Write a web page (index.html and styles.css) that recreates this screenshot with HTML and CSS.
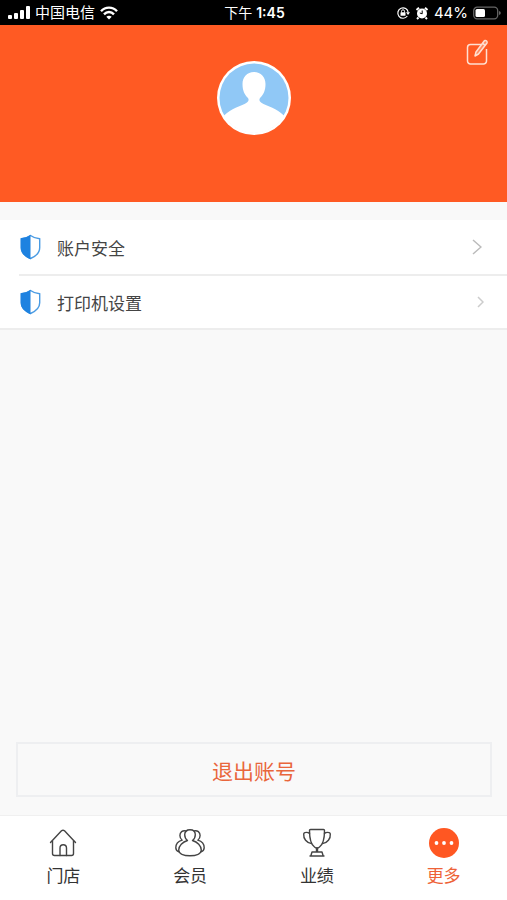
FILE: index.html
```html
<!DOCTYPE html>
<html lang="zh-CN">
<head>
    <meta charset="UTF-8">
    <meta name="viewport" content="width=device-width, initial-scale=1.0">
    <title>更多</title>
    <link rel="stylesheet" href="styles.css">
</head>
<body>
    <div class="status-bar">
        <div class="status-left">
            <svg width="22" height="14" viewBox="0 0 22 14" fill="#fff" aria-hidden="true">
                <rect x="0" y="9" width="4" height="4" rx="1"/>
                <rect x="6" y="7" width="4" height="6" rx="1"/>
                <rect x="12" y="4" width="4" height="9" rx="1"/>
                <rect x="18" y="0" width="4" height="13" rx="1"/>
            </svg>
            <span>中国电信</span>
            <svg width="18" height="14" viewBox="0 0 18 14" fill="none" stroke="#fff" stroke-width="2.4" aria-hidden="true">
                <path d="M1 5.2C5.4 .4 12.6 .4 17 5.2"/>
                <path d="M4 8.3c2.9-3 7.100-3 10 0"/>
                <path d="M9 13.500L6.300 10.700c1.600-1.400 3.800-1.400 5.400 0z" fill="#fff" stroke="none"/>
            </svg>
        </div>
        <div class="status-time">下午 <b>1:45</b></div>
        <div class="status-right">
            <svg width="14" height="14" viewBox="0 0 14 14" fill="none" stroke="#fff" aria-hidden="true">
                <path d="M11.300 10A5.200 5.200 0 1 1 12.200 6.500" stroke-width="1.200"/>
                <path d="M10 6.300h4L12 9z" fill="#fff" stroke="none"/>
                <rect x="4.500" y="6.200" width="5" height="3.600" rx=".5" fill="#fff" stroke="none"/>
                <path d="M5.500 6.500V5.300a1.500 1.500 0 0 1 3 0v1.200"/>
            </svg>
            <svg width="14" height="14" viewBox="0 0 14 14" fill="none" stroke="#fff" aria-hidden="true">
                <circle cx="7" cy="7.500" r="5" fill="#fff" stroke="none"/>
                <path d="M1.500 4L4 1.700M12.500 4L10 1.700M3.500 11.500L2 13M10.500 11.500L12 13" stroke-width="2"/>
                <path d="M7.200 4.500v3.300L4.800 7" stroke="#000"/>
            </svg>
            <span class="battery-text">44%</span>
            <svg width="28" height="14" viewBox="0 0 28 14" aria-hidden="true">
                <rect x=".7" y="1.200" width="24" height="11.600" rx="3.500" fill="none" stroke="#666" stroke-width="1.300"/>
                <rect x="2.500" y="3" width="9.500" height="8" rx="1.500" fill="#fff"/>
                <path d="M26 5v4q1.800-.6 1.800-2T26 5z" fill="#666"/>
            </svg>
        </div>
    </div>

    <header class="profile">
        <svg class="avatar" viewBox="0 0 74 74" role="img" aria-label="头像">
            <defs>
                <clipPath id="avatar-clip"><circle cx="37" cy="37" r="35"/></clipPath>
            </defs>
            <circle cx="37" cy="37" r="37" fill="#fff"/>
            <circle cx="37" cy="37" r="34.500" fill="#90c8f6"/>
            <path clip-path="url(#avatar-clip)" fill="#fff" d="M37 11c-7 0-11.500 5-11.500 12 0 6.500 2 10.500 5.500 14 1.500 2.500 0 4.500-3.500 6C20 46 11 49.500 5 57v17h64V57c-6-7.500-15-11-22.500-14-3.500-1.500-5-3.500-3.500-6 3.500-3.500 5.500-7.500 5.500-14 0-7-4.500-12-11.500-12z"/>
        </svg>
        <button class="edit-button" type="button" aria-label="编辑">
            <svg width="24" height="28" viewBox="0 0 24 28" fill="none" stroke="#ffe0d2" stroke-width="1.500" stroke-linejoin="round" aria-hidden="true">
                <path d="M15 5.500H4.500a3 3 0 0 0-3 3V22a3 3 0 0 0 3 3h13a3 3 0 0 0 3-3V10"/>
                <path d="M9 17l1-4L18 2.300a1.700 1.700 0 0 1 2.800 2L12.500 15z" fill="#ff8c64"/>
                <path d="M16.500 4.300l2.800 2"/>
            </svg>
        </button>
    </header>

    <main class="content">
        <nav class="menu">
            <a class="menu-item" href="#">
                <svg class="shield" viewBox="0 0 22 26" aria-hidden="true">
                    <path d="M11 1.500c3 2.200 6 3.100 9.200 3.300v9c0 4.900-3.700 8.400-9.200 10.700C5.500 22.200 1.800 18.700 1.800 13.800v-9C5 4.600 8 3.700 11 1.500z" fill="#fff" stroke="#4a9be3" stroke-width="1.400"/>
                    <path d="M11 .8C8 3 5 4 1.200 4.200v9.600C1.200 19 5.200 22.800 11 25.200z" fill="#1e82e0"/>
                </svg>
                <span class="menu-text">账户安全</span>
                <svg class="arrow" width="10" height="16" viewBox="0 0 10 16" aria-hidden="true"><path d="M1 1l8 7-8 7"/></svg>
            </a>
            <a class="menu-item" href="#">
                <svg class="shield" viewBox="0 0 22 26" aria-hidden="true">
                    <path d="M11 1.500c3 2.200 6 3.100 9.200 3.300v9c0 4.900-3.700 8.400-9.200 10.700C5.500 22.200 1.800 18.700 1.800 13.800v-9C5 4.600 8 3.700 11 1.500z" fill="#fff" stroke="#4a9be3" stroke-width="1.400"/>
                    <path d="M11 .8C8 3 5 4 1.200 4.200v9.600C1.200 19 5.200 22.800 11 25.200z" fill="#1e82e0"/>
                </svg>
                <span class="menu-text">打印机设置</span>
                <svg class="arrow arrow-small" width="7" height="12" viewBox="0 0 7 12" aria-hidden="true"><path d="M1 1l5 5-5 5"/></svg>
            </a>
        </nav>
        <button class="logout" type="button">退出账号</button>
    </main>

    <nav class="tab-bar">
        <a class="tab" href="#">
            <svg class="tab-icon" viewBox="0 0 30 30" aria-hidden="true">
                <path d="M2.500 14.500L13.500 2.800q1.500-1.300 3 0L27.500 14.500"/>
                <path d="M4.500 13v12.500q0 2 2 2h17q2 0 2-2V13"/>
                <path d="M12 27.500V20a3 3 0 0 1 6.500 0v7.500"/>
            </svg>
            <span>门店</span>
        </a>
        <a class="tab" href="#">
            <svg class="tab-icon" viewBox="0 0 30 30" aria-hidden="true">
                <path d="M12.500 12.500C10.500 11 9.700 9 9.700 6.800c0-3 2.200-5 5.300-5s5.300 2 5.300 5c0 2.200-.8 4.200-2.800 5.700 4.900 1.400 8.800 5.200 8.800 9.500 0 3.800-5 5.800-11.300 5.800S3.700 25.800 3.700 22c0-4.300 3.900-8.100 8.800-9.500z"/>
                <path d="M11 2.900C7.500 2 4.900 4.200 4.900 7.500c0 2 .8 3.600 2.300 4.700C3.500 13.300.8 16.300.8 19.700c0 2 1.200 3.400 3.200 4.200"/>
                <path d="M19 2.900c3.500-.9 6.100 1.300 6.100 4.600 0 2-.8 3.600-2.300 4.700 3.700 1.100 6.400 4.100 6.400 7.500 0 2-1.200 3.400-3.200 4.200"/>
            </svg>
            <span>会员</span>
        </a>
        <a class="tab" href="#">
            <svg class="tab-icon" viewBox="0 0 30 30" aria-hidden="true">
                <path d="M7.500 2.500Q7.500 1.500 8.500 1.500h13q1 0 1 1c0 8.500-1.500 14-5 16.500-1.500 1.300-3.500 1.300-5 0-3.500-2.500-5-8-5-16.500z"/>
                <path d="M7.500 5.500c-1-1.300-5.500-1.800-5.800.5-.4 4.500 2.800 9 7.800 9.500M22.500 5.500c1-1.300 5.500-1.800 5.800.5.400 4.500-2.800 9-7.800 9.500"/>
                <path d="M14.500 20v4M15.500 20v4M10 24h10l1.200 4H8.800zM8 28h14"/>
            </svg>
            <span>业绩</span>
        </a>
        <a class="tab tab-active" href="#" aria-current="page">
            <svg class="tab-icon" viewBox="0 0 30 30" aria-hidden="true">
                <circle class="more-circle" cx="15" cy="15" r="15"/>
                <circle class="more-dot" cx="7.500" cy="15" r="1.900"/>
                <circle class="more-dot" cx="15" cy="15" r="1.900"/>
                <circle class="more-dot" cx="22.500" cy="15" r="1.900"/>
            </svg>
            <span>更多</span>
        </a>
    </nav>
</body>
</html>
```
FILE: styles.css
```css
* {
    box-sizing: border-box;
}

body {
    display: flex;
    flex-direction: column;
    min-height: 100vh;
    margin: 0;
    background-color: #f9f9f9;
    color: #444;
    font-family: "Liberation Sans", "Noto Sans CJK SC", sans-serif;
}

a {
    color: inherit;
    text-decoration: none;
}

/* status bar */
.status-bar {
    display: grid;
    grid-template-columns: 1fr auto 1fr;
    align-items: center;
    height: 25px;
    padding: 0 6px 0 8px;
    background-color: #000;
    color: #fff;
    font-family: Inter, "Noto Sans CJK SC", sans-serif;
    font-size: 15px;
    line-height: 25px;
}

.status-left,
.status-right {
    display: flex;
    align-items: center;
    gap: 5px;
}

.status-right {
    justify-content: flex-end;
}

.status-time {
    font-size: 14px;
}

.status-time b {
    font-weight: 600;
}

.battery-text {
    font-size: 15px;
}

/* profile */
.profile {
    position: relative;
    display: flex;
    justify-content: center;
    height: 177px;
    padding-top: 36px;
    background-color: #ff5a23;
}

.avatar {
    width: 74px;
    height: 74px;
}

.edit-button {
    position: absolute;
    top: 14px;
    right: 17px;
    padding: 0;
    border: none;
    background: none;
    cursor: pointer;
}

.edit-button svg {
    display: block;
}

/* menu */
.content {
    flex: 1;
    display: flex;
    flex-direction: column;
    justify-content: space-between;
    padding: 18px 0;
}

.menu {
    background-color: #fff;
    border-bottom: 2px solid #ededed;
}

.menu-item {
    display: flex;
    align-items: center;
    height: 54px;
    margin-left: 19px;
    padding-right: 25px;
}

.menu-item + .menu-item {
    border-top: 2px solid #ededed;
}

.shield {
    width: 23px;
    height: 26px;
    margin-right: 15px;
}

.menu-text {
    flex: 1;
    font-size: 17px;
}

.arrow {
    fill: none;
    stroke: #bbb;
    stroke-width: 1.5;
}

.arrow-small {
    margin-right: -2px;
    stroke: #ccc;
}

.logout {
    height: 55px;
    margin: 0 15px 0 16px;
    border: 2px solid #eeeff1;
    background-color: #f9f9f9;
    color: #e9663c;
    font-family: inherit;
    font-size: 21px;
    cursor: pointer;
}

/* tab bar */
.tab-bar {
    display: grid;
    grid-template-columns: repeat(4, 1fr);
    height: 85px;
    padding-top: 12px;
    background-color: #fff;
    border-top: 1px solid #f0f0f0;
}

.tab {
    display: flex;
    flex-direction: column;
    align-items: center;
    gap: 6px;
    color: #333;
    font-size: 17px;
    line-height: 25px;
}

.tab-icon {
    width: 30px;
    height: 30px;
    fill: none;
    stroke: #444;
    stroke-width: 1.4;
    stroke-linejoin: round;
    stroke-linecap: round;
}

.tab-active {
    color: #ee6237;
}

.more-circle {
    fill: #ff5722;
    stroke: none;
}

.more-dot {
    fill: #fff;
    stroke: none;
}
```
